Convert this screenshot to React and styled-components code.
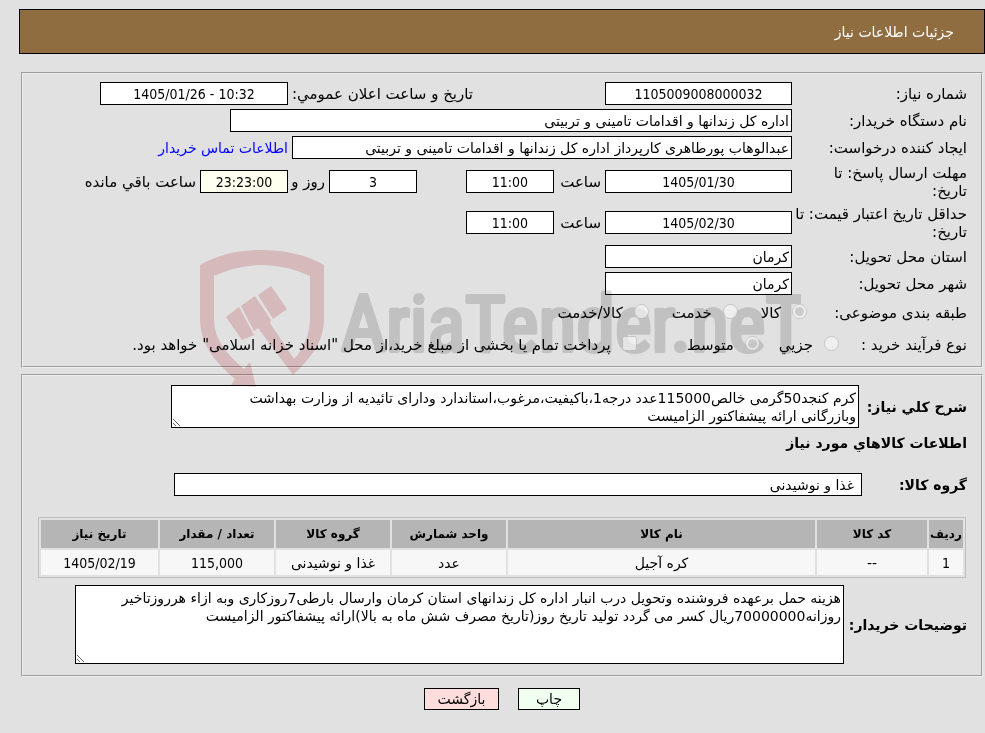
import React from 'react';
import styled, { createGlobalStyle } from 'styled-components';

const textFont = `'DejaVu Sans', sans-serif`;
const numberFont = `'DejaVu Sans Condensed', 'DejaVu Sans', sans-serif`;

const GlobalStyle = createGlobalStyle`
  * {
    box-sizing: border-box;
  }

  body {
    margin: 0;
    background-color: #e1e1e1;
    color: #000;
    font-family: ${textFont};
    font-size: 14px;
    line-height: 18px;
  }

  input,
  textarea,
  button {
    font: inherit;
    color: inherit;
  }
`;

const Page = styled.div`
  position: relative;
  padding: 9px 0 20px 19px;
`;

const TitleBar = styled.h1`
  margin: 0 0 18px;
  padding: 13px 30px 12px;
  border: 1px solid #000;
  background-color: #8f6d40;
  color: #fff;
  font-size: 14px;
  font-weight: normal;
`;

const Panel = styled.section`
  display: flex;
  flex-direction: column;
  gap: 4px;
  margin: 0 2px 6px;
  padding: ${(props) => props.$pad};
  border: 2px groove #f0f0f0;
`;

const Row = styled.div`
  display: flex;
  align-items: center;
  gap: 4px;
  min-height: ${(props) => props.$height || 23}px;
`;

const Caption = styled.label`
  flex: none;
  width: ${(props) => (props.$width ? `${props.$width}px` : 'auto')};
  font-size: 15px;
  white-space: nowrap;
`;

const BoldCaption = styled(Caption)`
  font-size: 14px;
  font-weight: bold;
`;

const MainCell = styled.div`
  display: flex;
  align-items: center;
  gap: 4px;
  width: 500px;
`;

const Spacer = styled.span`
  flex: 1;
`;

const Field = styled.input`
  flex: 0 1 auto;
  width: ${(props) => props.$width}px;
  min-width: 0;
  height: 23px;
  margin: 0;
  padding: 0 ${(props) => props.$pad || 2}px;
  border: 1px solid #000;
  border-radius: 0;
  background-color: ${(props) => props.$color || '#fff'};
`;

const NumberField = styled(Field).attrs({ dir: 'ltr', readOnly: true })`
  font-family: ${numberFont};
  text-align: center;
`;

const Note = styled.textarea`
  flex: 0 1 auto;
  width: ${(props) => props.$width}px;
  height: ${(props) => props.$height}px;
  margin: 0;
  padding: 3px 2px;
  border: 1px solid #000;
  border-radius: 0;
  background-color: #fff;
  overflow: hidden;
`;

const ContactLink = styled.a`
  color: #00f;
  text-decoration: none;
`;

const ChoiceGroup = styled.div`
  display: flex;
  align-items: center;
  gap: ${(props) => props.$gap}px;
  font-size: 15px;
`;

const Choice = styled.label`
  display: flex;
  align-items: center;
  gap: 11px;
  margin-right: ${(props) => props.$space || 0}px;
`;

const Mark = styled.input`
  position: relative;
  z-index: 1;
  width: 15px;
  height: 15px;
  margin: 0 0 4px;
`;

const SectionTitle = styled.h2`
  margin: 0 0 15px;
  font-size: 14px;
  line-height: 22px;
`;

const GoodsTable = styled.table`
  width: calc(100% - 2px);
  margin: 17px 1px 3px;
  border: 1px solid #bebebe;
  border-collapse: separate;
  border-spacing: 2px;
  table-layout: fixed;
  text-align: center;

  th {
    height: 28px;
    padding: 0;
    background-color: #b5b5b5;
    font-size: 12px;
  }

  td {
    height: 25px;
    padding: 0;
    background-color: #f7f7f7;
  }
`;

const Amount = styled.span`
  font-family: ${numberFont};
`;

const Actions = styled.div`
  display: flex;
  justify-content: center;
  gap: 19px;
  margin-top: 11px;
`;

const ActionButton = styled.button`
  width: ${(props) => props.$width}px;
  height: 22px;
  padding: 0;
  border: 1px solid #000;
  background-color: ${(props) => props.$color};
`;

const WatermarkLayer = styled.svg`
  position: absolute;
  top: 250px;
  left: 0;
  right: 0;
  margin: 0 auto;
  width: 617px;
  height: 140px;
  mix-blend-mode: multiply;
  pointer-events: none;
  direction: ltr;
`;

function Watermark() {
  return (
    <WatermarkLayer viewBox="184 250 617 140" aria-hidden="true">
      <g fill="#f3d2d4">
        <path d="M200 265Q226 250 262 250T324 265V318C324 342 311 358 293 375L258 328L254 331L241 306L255 296L271 320L270 323L294 359C305 347 310 333 310 318V276Q286 265 262 265T214 276V318C214 340 226 353 244 369L250 362L256 387L231 385L235 379C214 361 200 344 200 318Z" />
        <path d="M226 317L239 307L254 335L242 340Z" />
        <path d="M258 295L271 286L287 309L273 319Z" />
      </g>
      <text
        x="341"
        y="351"
        fill="#dbdbdb"
        stroke="#dbdbdb"
        strokeWidth="4"
        strokeLinejoin="round"
        fontFamily="'Liberation Sans Narrow', 'Roboto Condensed', 'Liberation Sans', sans-serif"
        fontSize="78"
      >
        AriaTender.neT
      </text>
    </WatermarkLayer>
  );
}

const columns = [
  { title: 'ردیف', width: 34, value: '1', numeric: true },
  { title: 'کد کالا', width: 110, value: '--' },
  { title: 'نام کالا', value: 'کره آجیل' },
  { title: 'واحد شمارش', width: 114, value: 'عدد' },
  { title: 'گروه کالا', width: 114, value: 'غذا و نوشیدنی' },
  { title: 'تعداد / مقدار', width: 114, value: '115,000', numeric: true },
  { title: 'تاریخ نیاز', width: 117, value: '1405/02/19', numeric: true },
];

function NeedInfo() {
  return (
    <Panel $pad="8px 14px 7px">
      <Row>
        <Caption $width={171} htmlFor="needNo">شماره نیاز:</Caption>
        <MainCell>
          <NumberField id="needNo" $width={187} defaultValue="1105009008000032" />
          <Spacer />
          <Caption htmlFor="announce">تاریخ و ساعت اعلان عمومي:</Caption>
        </MainCell>
        <NumberField id="announce" $width={188} defaultValue="1405/01/26 - 10:32" />
      </Row>
      <Row>
        <Caption $width={171} htmlFor="buyer">نام دستگاه خریدار:</Caption>
        <Field id="buyer" $width={562} readOnly defaultValue="اداره کل زندانها و اقدامات تامینی و تربیتی" />
      </Row>
      <Row>
        <Caption $width={171} htmlFor="creator">ایجاد کننده درخواست:</Caption>
        <Field
          id="creator"
          $width={500}
          readOnly
          defaultValue="عبدالوهاب پورطاهری کارپرداز اداره کل زندانها و اقدامات تامینی و تربیتی"
        />
        <ContactLink href="#contact">اطلاعات تماس خریدار</ContactLink>
      </Row>
      <Row $height={37}>
        <Caption $width={171} htmlFor="replyDate">
          مهلت ارسال پاسخ: تا
          <br />
          تاریخ:
        </Caption>
        <MainCell>
          <NumberField id="replyDate" $width={187} defaultValue="1405/01/30" />
          <Caption $width={43} htmlFor="replyHour">ساعت</Caption>
          <NumberField id="replyHour" $width={88} defaultValue="11:00" />
          <Spacer />
          <NumberField id="daysLeft" $width={88} defaultValue="3" />
          <Caption $width={33} htmlFor="daysLeft">روز و</Caption>
        </MainCell>
        <NumberField id="hoursLeft" $width={88} $color="#fffff0" defaultValue="23:23:00" />
        <Caption htmlFor="hoursLeft">ساعت باقي مانده</Caption>
      </Row>
      <Row $height={37}>
        <Caption $width={171} htmlFor="priceDate">
          حداقل تاریخ اعتبار قیمت: تا
          <br />
          تاریخ:
        </Caption>
        <MainCell>
          <NumberField id="priceDate" $width={187} defaultValue="1405/02/30" />
          <Caption $width={43} htmlFor="priceHour">ساعت</Caption>
          <NumberField id="priceHour" $width={88} defaultValue="11:00" />
        </MainCell>
      </Row>
      <Row>
        <Caption $width={171} htmlFor="province">استان محل تحویل:</Caption>
        <Field id="province" $width={187} readOnly defaultValue="کرمان" />
      </Row>
      <Row>
        <Caption $width={171} htmlFor="city">شهر محل تحویل:</Caption>
        <Field id="city" $width={187} readOnly defaultValue="کرمان" />
      </Row>
      <Row $height={28}>
        <Caption as="span" $width={156}>طبقه بندی موضوعی:</Caption>
        <ChoiceGroup $gap={23}>
          <Choice>
            <Mark type="radio" name="subject" disabled defaultChecked />
            کالا
          </Choice>
          <Choice>
            <Mark type="radio" name="subject" disabled />
            خدمت
          </Choice>
          <Choice>
            <Mark type="radio" name="subject" disabled />
            کالا/خدمت
          </Choice>
        </ChoiceGroup>
      </Row>
      <Row $height={28}>
        <Caption as="span" $width={124}>نوع فرآیند خرید :</Caption>
        <ChoiceGroup $gap={19}>
          <Choice>
            <Mark type="radio" name="process" disabled />
            جزیي
          </Choice>
          <Choice>
            <Mark type="radio" name="process" disabled defaultChecked />
            متوسط
          </Choice>
          <Choice $space={31}>
            <Mark type="checkbox" disabled />
            پرداخت تمام یا بخشی از مبلغ خرید،از محل "اسناد خزانه اسلامی" خواهد بود.
          </Choice>
        </ChoiceGroup>
      </Row>
    </Panel>
  );
}

function GoodsInfo() {
  return (
    <Panel $pad="9px 14px 11px">
      <Row>
        <BoldCaption $width={104} htmlFor="summary">شرح کلي نیاز:</BoldCaption>
        <Note
          id="summary"
          $width={688}
          $height={43}
          readOnly
          defaultValue={
            'کرم کنجد50گرمی خالص115000عدد درجه1،باکیفیت،مرغوب،استاندارد ودارای تائیدیه از وزارت بهداشت\nوبازرگانی ارائه پیشفاکتور الزامیست'
          }
        />
      </Row>
      <SectionTitle>اطلاعات کالاهاي مورد نیاز</SectionTitle>
      <Row>
        <BoldCaption $width={101} htmlFor="group">گروه کالا:</BoldCaption>
        <Field id="group" $width={688} $pad={7} readOnly defaultValue="غذا و نوشیدنی" />
      </Row>
      <GoodsTable>
        <colgroup>
          {columns.map((column) => (
            <col key={column.title} style={{ width: column.width }} />
          ))}
        </colgroup>
        <thead>
          <tr>
            {columns.map((column) => (
              <th key={column.title}>{column.title}</th>
            ))}
          </tr>
        </thead>
        <tbody>
          <tr>
            {columns.map((column) => (
              <td key={column.title}>
                {column.numeric ? <Amount>{column.value}</Amount> : column.value}
              </td>
            ))}
          </tr>
        </tbody>
      </GoodsTable>
      <Row>
        <BoldCaption $width={119} htmlFor="notes">توضیحات خریدار:</BoldCaption>
        <Note
          id="notes"
          $width={769}
          $height={79}
          readOnly
          defaultValue={
            'هزینه حمل برعهده فروشنده وتحویل درب انبار اداره کل زندانهای استان کرمان وارسال بارطی7روزکاری وبه ازاء هرروزتاخیر\nروزانه70000000ریال کسر می گردد تولید تاریخ روز(تاریخ مصرف شش ماه به بالا)ارائه پیشفاکتور الزامیست'
          }
        />
      </Row>
    </Panel>
  );
}

export default function App() {
  return (
    <>
      <GlobalStyle />
      <Page dir="rtl" lang="fa">
        <TitleBar>جزئیات اطلاعات نیاز</TitleBar>
        <NeedInfo />
        <GoodsInfo />
        <Actions>
          <ActionButton type="button" $width={62} $color="#f0fff0">چاپ</ActionButton>
          <ActionButton type="button" $width={75} $color="#ffdddd">بازگشت</ActionButton>
        </Actions>
        <Watermark />
      </Page>
    </>
  );
}
